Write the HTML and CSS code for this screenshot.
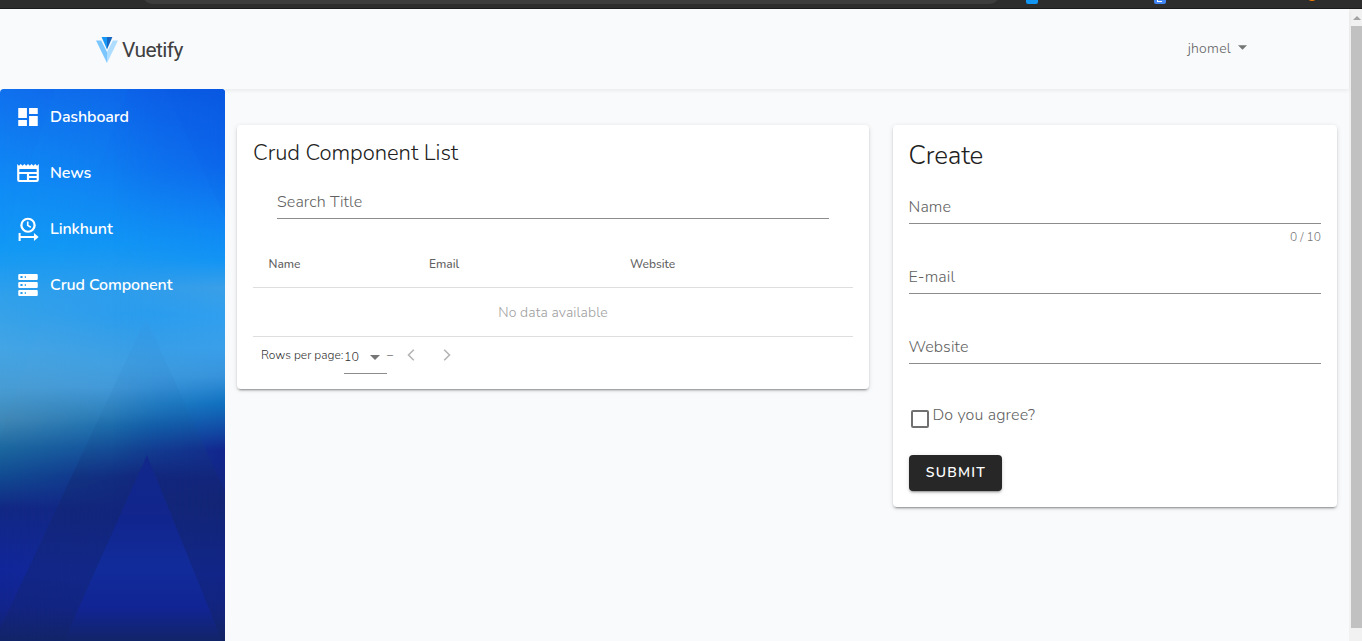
FILE: index.html
```
<!DOCTYPE html>
<html lang="en">
<head>
<meta charset="utf-8">
<title>Crud Component</title>
<link rel="stylesheet" href="styles.css">
</head>
<body>
<div class="browser-strip">
  <div class="address-bar"></div>
  <span class="ext ext-blue"></span>
  <span class="ext ext-doc"><i></i></span>
  <span class="ext ext-orange"></span>
</div>
<div class="viewport">
  <div class="app">
    <header class="topbar">
      <div class="brand">
        <svg class="brand-mark" viewBox="0 0 22 26">
          <path d="M0 3.6h5.2L11 15v11z" fill="#7bc6ff"/>
          <path d="M22 3.6h-5.2L11 15v11z" fill="#aeddff"/>
          <path d="M5.6 0H11v12.6z" fill="#1697f6"/>
          <path d="M16.4 0H11v12.6z" fill="#1867c0"/>
        </svg>
        <span class="brand-name">Vuetify</span>
      </div>
      <div class="user"><span>jhomel</span><svg viewBox="0 0 10 5"><path d="M0 0h10L5 5z" fill="#757575"/></svg></div>
    </header>
    <div class="body">
      <aside class="sidebar">
        <svg class="backdrop" viewBox="0 0 225 552" preserveAspectRatio="none">
          <defs>
            <linearGradient id="left" x1="0" y1="0" x2="0" y2="552" gradientUnits="userSpaceOnUse">
              <stop offset="0" stop-color="#1070ee"/><stop offset=".18" stop-color="#108cf6"/>
              <stop offset=".29" stop-color="#1298f5"/><stop offset=".37" stop-color="#30a0ec"/>
              <stop offset=".47" stop-color="#46a5e4"/><stop offset=".54" stop-color="#4a9dd4"/>
              <stop offset=".6" stop-color="#4187b5"/><stop offset=".65" stop-color="#1c68a0"/>
              <stop offset=".7" stop-color="#114c92"/><stop offset=".76" stop-color="#122884"/>
              <stop offset=".87" stop-color="#11269a"/><stop offset=".94" stop-color="#12248c"/>
              <stop offset="1" stop-color="#122468"/>
            </linearGradient>
            <linearGradient id="mid" x1="0" y1="0" x2="0" y2="552" gradientUnits="userSpaceOnUse">
              <stop offset="0" stop-color="#0d62e8"/><stop offset=".15" stop-color="#0e7af0"/>
              <stop offset=".28" stop-color="#1195f5"/><stop offset=".36" stop-color="#2c9cec"/>
              <stop offset=".41" stop-color="#279bee"/><stop offset=".5" stop-color="#3f9fe2"/>
              <stop offset=".54" stop-color="#4098da"/><stop offset=".58" stop-color="#2880c0"/>
              <stop offset=".61" stop-color="#1268ae"/><stop offset=".655" stop-color="#12469a"/>
              <stop offset=".7" stop-color="#12288a"/><stop offset=".78" stop-color="#122688"/>
              <stop offset=".88" stop-color="#122c98"/><stop offset=".94" stop-color="#112494"/>
              <stop offset="1" stop-color="#122466"/>
            </linearGradient>
            <linearGradient id="right" x1="0" y1="0" x2="0" y2="552" gradientUnits="userSpaceOnUse">
              <stop offset="0" stop-color="#0a58e2"/><stop offset=".14" stop-color="#0d68eb"/>
              <stop offset=".24" stop-color="#0f84f4"/><stop offset=".31" stop-color="#1294f4"/>
              <stop offset=".36" stop-color="#3a9fe8"/><stop offset=".41" stop-color="#309fee"/>
              <stop offset=".47" stop-color="#3a9fe9"/><stop offset=".52" stop-color="#3793db"/>
              <stop offset=".57" stop-color="#1070bf"/><stop offset=".61" stop-color="#1250a8"/>
              <stop offset=".655" stop-color="#12268e"/><stop offset=".75" stop-color="#12267c"/>
              <stop offset=".88" stop-color="#112599"/><stop offset=".95" stop-color="#122486"/>
              <stop offset="1" stop-color="#12245f"/>
            </linearGradient>
            <linearGradient id="across1"><stop offset="0" stop-color="#000"/><stop offset=".7" stop-color="#fff"/></linearGradient>
            <linearGradient id="across2"><stop offset=".5" stop-color="#000"/><stop offset="1" stop-color="#fff"/></linearGradient>
            <mask id="fade1"><rect width="225" height="552" fill="url(#across1)"/></mask>
            <mask id="fade2"><rect width="225" height="552" fill="url(#across2)"/></mask>
            <linearGradient id="peak" x1="0" y1="229" x2="0" y2="552" gradientUnits="userSpaceOnUse">
              <stop offset="0" stop-color="#4088d8" stop-opacity=".1"/><stop offset=".3" stop-color="#165c98" stop-opacity=".1"/>
              <stop offset=".5" stop-color="#122468" stop-opacity=".35"/><stop offset="1" stop-color="#122468" stop-opacity=".35"/>
            </linearGradient>
            <linearGradient id="inner" x1="0" y1="366" x2="0" y2="552" gradientUnits="userSpaceOnUse">
              <stop offset="0" stop-color="#12288a"/><stop offset=".35" stop-color="#11258e"/>
              <stop offset=".6" stop-color="#112c9a"/><stop offset=".82" stop-color="#112494"/><stop offset="1" stop-color="#122468"/>
            </linearGradient>
          </defs>
          <rect width="225" height="552" fill="url(#left)"/>
          <rect width="225" height="552" fill="url(#mid)" mask="url(#fade1)"/>
          <rect width="225" height="552" fill="url(#right)" mask="url(#fade2)"/>
          <path d="M128 0L225 0V128L165 0z" fill="#0848d8" opacity=".05"/>
          <path d="M128 0L20 290L0 350V160L55 0z" fill="#20a8f8" opacity=".04"/>
          <path d="M146 229L225 403V552H0V540z" fill="url(#peak)"/>
          <path d="M147 366L222 552H64z" fill="url(#inner)"/>
        </svg>
        <nav>
          <a class="item"><svg viewBox="0 0 24 24" preserveAspectRatio="none"><path d="M13 3v6h8V3M13 21h8V11h-8M3 21h8v-6H3M3 13h8V3H3z"/></svg><span>Dashboard</span></a>
          <a class="item"><svg viewBox="0 0 24 24" preserveAspectRatio="none"><path d="M20 11H4V8h16M20 15h-7v-2h7M20 19h-7v-2h7M11 19H4v-6h7M20.33 4.67L18.67 3 17 4.67 15.33 3l-1.66 1.67L12 3l-1.67 1.67L8.67 3 7 4.67 5.33 3 3.67 4.67 2 3v16a2 2 0 0 0 2 2h16a2 2 0 0 0 2-2V3z"/></svg><span>News</span></a>
          <a class="item"><svg viewBox="0 0 24 24" preserveAspectRatio="none"><ellipse cx="12" cy="8.200" rx="6.100" ry="6.500" fill="none" stroke="#fff" stroke-width="2.100"/><path d="M11 4.500h1.500v3.400l2.500 1.700-.8 1.300L11 8.700z"/><path d="M3.300 16h1.900v3H17.500v-3l4.300 4-4.300 4v-3H5.200v3H3.300z"/></svg><span>Linkhunt</span></a>
          <a class="item"><svg viewBox="0 0 24 24" preserveAspectRatio="none"><path d="M4 1h16a1 1 0 0 1 1 1v4a1 1 0 0 1-1 1H4a1 1 0 0 1-1-1V2a1 1 0 0 1 1-1m0 8h16a1 1 0 0 1 1 1v4a1 1 0 0 1-1 1H4a1 1 0 0 1-1-1v-4a1 1 0 0 1 1-1m0 8h16a1 1 0 0 1 1 1v4a1 1 0 0 1-1 1H4a1 1 0 0 1-1-1v-4a1 1 0 0 1 1-1M9 5h1V3H9v2m0 8h1v-2H9v2m0 8h1v-2H9v2M5 3v2h2V3H5m0 8v2h2v-2H5m0 8v2h2v-2H5z"/></svg><span>Crud Component</span></a>
        </nav>
      </aside>
      <main class="content">
        <section class="card list">
          <h2>Crud Component List</h2>
          <div class="field search"><span>Search Title</span></div>
          <div class="table">
            <div class="thead"><span>Name</span><span>Email</span><span>Website</span></div>
            <div class="empty">No data available</div>
            <div class="pager">
              <span class="rows">Rows per page:</span>
              <div class="select"><span>10</span><svg viewBox="0 0 10 5"><path d="M0 0h10L5 5z" fill="#757575"/></svg></div>
              <span class="range">–</span>
              <svg class="chev" viewBox="0 0 8 12"><path d="M6.800 .8L1.500 6l5.300 5.200"/></svg>
              <svg class="chev next" viewBox="0 0 8 12"><path d="M1.200 .8L6.500 6l-5.300 5.200"/></svg>
            </div>
          </div>
        </section>
        <section class="card form">
          <h1>Create</h1>
          <div class="field f1"><span>Name</span></div>
          <div class="counter">0 / 10</div>
          <div class="field"><span>E-mail</span></div>
          <div class="field f3"><span>Website</span></div>
          <div class="check"><i></i><span>Do you agree?</span></div>
          <button>SUBMIT</button>
        </section>
      </main>
    </div>
  </div>
  <div class="scrollbar"><svg viewBox="0 0 8 4"><path d="M0 4L4 0l4 4z" fill="#a3a3a3"/></svg><div class="thumb"></div></div>
</div>
</body>
</html>
```
FILE: styles.css
```
* { box-sizing: border-box; }
body { margin: 0; height: 641px; overflow: hidden; display: flex; flex-direction: column; background: #f8fafc; font-family: Nunito, "Open Sans", sans-serif; font-weight: 300; color: #212121; }
h1, h2 { margin: 0; font-weight: 300; }
svg { display: block; }

.browser-strip { position: relative; height: 9px; flex: none; background: #2d2d2d; border-bottom: 1px solid #1c1c1c; overflow: hidden; }
.address-bar { width: 858px; height: 22px; margin: -18px 0 0 142px; border-radius: 11px; background: #3d3d3d; }
.ext { position: absolute; top: -8px; width: 12px; height: 12px; border-radius: 2px; }
.ext-blue { left: 1026px; background: #1395f3; }
.ext-doc { left: 1154px; background: #4285f4; }
.ext-doc i { position: absolute; left: 3px; top: 6px; width: 5px; height: 4px; border-bottom: 1px solid #fff; border-left: 1px solid #fff; }
.ext-orange { left: 1306px; top: -11px; border-radius: 6px; background: #f57c00; }

.viewport { flex: 1; display: flex; min-height: 0; }
.app { flex: 1; display: flex; flex-direction: column; }
.topbar { position: relative; height: 80px; flex: none; display: flex; justify-content: space-between; padding: 28px 102px 0 96px; box-shadow: 0 2px 4px rgba(0,0,0,.06); }
.brand { display: flex; }
.brand-mark { width: 22px; height: 26px; }
.brand-name { margin: 0 0 0 4px; font: 400 21px/26px Roboto, sans-serif; letter-spacing: -.6px; color: #404040; }
.user { display: flex; align-items: flex-start; gap: 7px; font-size: 14px; line-height: 24px; letter-spacing: .25px; color: #616161; }
.user svg { width: 9px; height: 5px; margin-top: 8px; }

.body { flex: 1; display: flex; min-height: 0; }
.sidebar { position: relative; z-index: 1; width: 225px; flex: none; border-radius: 4px 4px 0 0; overflow: hidden; }
.backdrop { position: absolute; inset: 0; width: 225px; height: 552px; }
nav { position: relative; }
.item { height: 56px; display: flex; align-items: center; gap: 9px; padding-left: 15px; color: #fff; font-size: 16px; font-weight: 600; letter-spacing: -.12px; }
.item svg { width: 26px; height: 24px; fill: #fff; }
.item span { line-height: 24px; margin-top: -1px; }

.content { flex: 1; display: flex; align-items: flex-start; gap: 24px; padding: 36px 12px 0; }
.card { background: #fff; border-radius: 4px; box-shadow: 0 3px 1px -2px rgba(0,0,0,.2), 0 2px 2px 0 rgba(0,0,0,.14), 0 1px 5px 0 rgba(0,0,0,.12); }
.list { width: 632px; height: 264px; padding: 12px 16px 0; }
.list h2 { font-size: 22px; line-height: 32px; letter-spacing: -.02px; }
.field { height: 34px; border-bottom: 1px solid #8c8c8c; font-size: 16px; line-height: 34px; letter-spacing: .12px; color: #616161; }
.search { margin: 16px 24px 0; }
.thead { display: grid; grid-template-columns: 160.5px 201px auto; height: 48px; margin-top: 21px; padding-left: 15.5px; border-bottom: 1px solid #dedede; font-size: 12px; font-weight: 500; line-height: 48px; color: #616161; }
.empty { height: 49px; border-bottom: 1px solid #dedede; text-align: center; font-size: 14px; line-height: 50px; letter-spacing: .1px; color: #9e9e9e; }
.pager { display: flex; align-items: flex-start; padding-left: 8px; font-size: 12px; font-weight: 350; color: #333; line-height: 36px; }
.rows { width: 83px; white-space: nowrap; }
.select { width: 43px; height: 37px; display: flex; justify-content: space-between; padding: 2px 7px 0 0; border-bottom: 1px solid #8c8c8c; line-height: 36px; font-size: 12.5px; }
.select svg { width: 10px; height: 5px; margin-top: 16px; }
.range { width: 20px; }
.chev { width: 8px; height: 12px; margin-top: 12px; fill: none; stroke: #b5b5b5; stroke-width: 1.6; }
.next { margin-left: 28px; }

.form { width: 444px; height: 382px; padding: 13px 16px 0; }
.form h1 { font-size: 26px; line-height: 36px; letter-spacing: -.2px; margin-left: -.5px; }
.f1 { margin-top: 16px; }
.form .field span { margin-left: -.5px; }
.counter { height: 36px; padding-top: 1px; text-align: right; font-size: 12px; line-height: 24px; color: #757575; }
.f3 { margin-top: 36px; }
.check { display: flex; gap: 3px; margin: 39px 0 0 2px; height: 52px; font-size: 16px; line-height: 24px; letter-spacing: .14px; color: #616161; }
.check i { width: 18px; height: 18px; margin: 7px .5px 0 0; border: 2px solid #707070; border-radius: 2px; }
button { display: block; width: 93px; height: 36px; padding: 0 0 0 1px; border: 0; border-radius: 4px; background: #272727; color: #fff; font: 600 14px/34px Nunito, "Open Sans", sans-serif; letter-spacing: 1.25px; box-shadow: 0 3px 1px -2px rgba(0,0,0,.2), 0 2px 2px 0 rgba(0,0,0,.14), 0 1px 5px 0 rgba(0,0,0,.12); }

.scrollbar { width: 13px; flex: none; background: #f1f1f1; padding-left: 2px; }
.scrollbar svg { width: 8px; height: 4px; margin: 7px 0 6px 2px; }
.thumb { height: 602px; background: #c1c1c1; }
```
